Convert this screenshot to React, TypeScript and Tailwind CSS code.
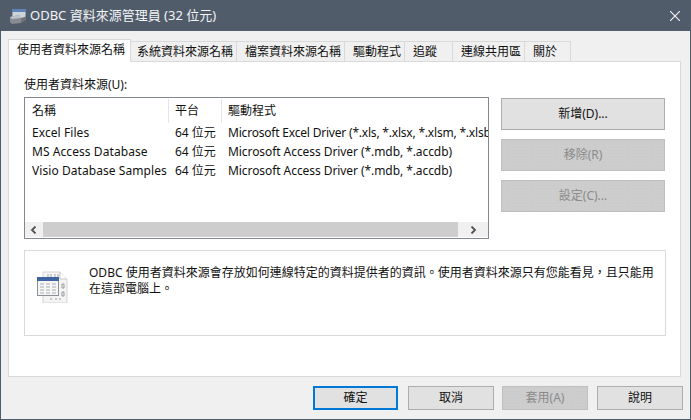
const FONT = 'font-["Noto_Sans","Noto_Sans_CJK_TC",sans-serif]'

const tabs = [
  { label: '系統資料來源名稱', cls: 'w-[106px] pl-[6px]' },
  { label: '檔案資料來源名稱', cls: 'w-[108px] pl-[8px]' },
  { label: '驅動程式', cls: 'w-[60px] pl-[8px]' },
  { label: '追蹤', cls: 'w-[48px] pl-[8px]' },
  { label: '連線共用區', cls: 'w-[72px] pl-[8px]' },
  { label: '關於', cls: 'w-[46px] pl-[8px]' },
]

const rows = [
  { name: 'Excel Files', driver: 'Microsoft Excel Driver (*.xls, *.xlsx, *.xlsm, *.xlsb)', fit: 'tracking-[-0.2px]' },
  { name: 'MS Access Database', driver: 'Microsoft Access Driver (*.mdb, *.accdb)', fit: 'tracking-[-0.07px]' },
  { name: 'Visio Database Samples', driver: 'Microsoft Access Driver (*.mdb, *.accdb)', fit: 'tracking-[-0.07px]' },
]

function TitleIcon() {
  return (
    <svg width="18" height="16" viewBox="0 0 18 16">
      <rect x="3.5" y="1.5" width="13" height="10" fill="#ccd3db" stroke="#98a1ab" />
      <rect x="3" y="1" width="14" height="3" fill="#5f83b8" />
      <path d="M1 9 L10 7 L12 10 L12 15 L3 16 L1 14 Z" fill="#868c92" />
      <path d="M1 9 L10 7 L12 10 L3 11 Z" fill="#bcc2c7" />
      <path d="M12 10 L17 8.5 L17 12 L12 15 Z" fill="#6f757a" />
    </svg>
  )
}

function InfoIcon() {
  return (
    <svg width="32" height="32" viewBox="0 0 32 32">
      <path d="M6 1 H23 L30 8 V32 H6 Z" fill="#f4f4f4" stroke="#d4d4d4" />
      <path d="M23 1 V8 H30" fill="#ffffff" stroke="#c8c8c8" />
      <path d="M11 3 v3 M14 3 v3 M18 3 v3 M21 3 v3" stroke="#a8a8a8" />
      <path d="M25 13 h2 v4 h-2 Z M25 21 h2 v4 h-2 Z M13 28 h2 M18 28 h2 M22 28 h2" stroke="#9a9a9a" fill="none" />
      <rect x="0.5" y="6.5" width="21" height="18" fill="#f6f6f6" stroke="#8a8f99" />
      <rect x="0" y="6" width="22" height="4" fill="#3f62a1" />
      <path d="M3 13 h4 M9 13 h4 M15 13 h4 M3 16 h4 M9 16 h4 M15 16 h4 M3 19 h4 M9 19 h4 M15 19 h4 M3 22 h4 M9 22 h4 M15 22 h4" stroke="#a9adb3" />
    </svg>
  )
}

function Button({ label, disabled, primary, className }: { label: string; disabled?: boolean; primary?: boolean; className: string }) {
  return (
    <div
      className={`flex items-center justify-center text-xs ${className} ${
        disabled
          ? 'bg-[#cdcdcd] bg-[radial-gradient(circle,#c8c8c8_0.7px,transparent_0.8px)] bg-[length:3px_3px] border border-[#bfbfbf] text-[#8a8a8a]'
          : primary
            ? 'bg-[#e1e1e1] border-2 border-[#0078d7] text-[#111111]'
            : 'bg-[#e1e1e1] border border-[#adadad] text-[#111111]'
      }`}
    >
      {label}
    </div>
  )
}

export default function App() {
  return (
    <div lang="zh-Hant" className={`w-[691px] h-[420px] flex flex-col bg-[#f0f0f0] border border-t-0 border-[#515c6b] text-[#111111] overflow-hidden ${FONT}`}>
      <div className="h-[31px] shrink-0 -mx-px bg-[#515c6b] flex items-center text-white">
        <div className="ml-[9px] w-[18px] flex"><TitleIcon /></div>
        <span className="ml-[3px] text-[13px] text-[#f2f4f6]">ODBC 資料來源管理員 (32 位元)</span>
        <svg width="10" height="10" viewBox="0 0 10 10" className="ml-auto mr-[11px]">
          <path d="M0 0 L10 10 M10 0 L0 10" stroke="#f2f4f6" strokeWidth="1.1" />
        </svg>
      </div>

      <div className="flex-1 flex flex-col px-[7px] min-h-0">
        <div className="h-[30px] shrink-0 flex items-end relative z-10">
          <div className="w-[123px] h-[23px] bg-white border border-b-0 border-[#d9d9d9] flex items-center pl-[8px] text-xs -mb-px pb-[2px] whitespace-nowrap">
            使用者資料來源名稱
          </div>
          {tabs.map((t) => (
            <div key={t.label} className={`${t.cls} h-[20px] bg-[#f0f0f0] border border-l-0 border-b-0 border-[#d9d9d9] flex items-center text-xs whitespace-nowrap`}>
              {t.label}
            </div>
          ))}
        </div>

        <div className="w-[673px] h-[316px] shrink-0 bg-white border border-[#d9d9d9] pl-[15px] pt-[13px]">
          <div className="h-[20px] flex items-center text-xs">使用者資料來源(U):</div>
          <div className="flex">
            <div className="w-[465px] h-[142px] mt-[2px] border border-[#828790] flex flex-col shrink-0">
              <div className="h-[25px] pt-px flex text-xs items-center shrink-0">
                <div className="w-[144px] h-full pl-[7px] flex items-center border-r border-[#e5e5e5] shrink-0">名稱</div>
                <div className="w-[53px] h-full pl-[6px] flex items-center border-r border-[#e5e5e5] shrink-0">平台</div>
                <div className="pl-[6px]">驅動程式</div>
              </div>
              <div className="flex-1 overflow-hidden">
                {rows.map((r) => (
                  <div key={r.name} className="h-[19px] flex items-center text-xs whitespace-nowrap">
                    <div className="w-[144px] pl-[7px] shrink-0 tracking-[0.07px]">{r.name}</div>
                    <div className="w-[53px] pl-[6px] shrink-0">64 位元</div>
                    <div className={`pl-[6px] shrink-0 ${r.fit}`}>{r.driver}</div>
                  </div>
                ))}
              </div>
              <div className="h-[15px] mb-px shrink-0 flex bg-[#f0f0f0]">
                <div className="w-[18px] flex items-center justify-center">
                  <svg width="8" height="8" viewBox="0 0 8 8"><path d="M5.5 0.5 L2 4 L5.5 7.5" fill="none" stroke="#505050" strokeWidth="1.8" /></svg>
                </div>
                <div className="w-[415px] bg-[#cdcdcd]" />
                <div className="flex-1 flex items-center justify-center">
                  <svg width="8" height="8" viewBox="0 0 8 8"><path d="M2.5 0.5 L6 4 L2.5 7.5" fill="none" stroke="#505050" strokeWidth="1.8" /></svg>
                </div>
              </div>
            </div>
            <div className="ml-[12px] mt-[3px] flex flex-col gap-[9px]">
              <Button label="新增(D)..." className="w-[164px] h-[32px]" />
              <Button label="移除(R)" disabled className="w-[164px] h-[32px]" />
              <Button label="設定(C)..." disabled className="w-[164px] h-[32px]" />
            </div>
          </div>
          <div className="w-[642px] h-[86px] mt-[11px] border border-[#d9d9d9] flex">
            <div className="ml-[12px] mt-[20px] w-[32px] shrink-0"><InfoIcon /></div>
            <p className="ml-[20px] mt-[14px] w-[570px] text-xs leading-[16px]">
              ODBC 使用者資料來源會存放如何連線特定的資料提供者的資訊。使用者資料來源只有您能看見，且只能用在這部電腦上。
            </p>
          </div>
        </div>

        <div className="flex mt-[9px]">
          <Button label="確定" primary className="ml-[305px] w-[85px] h-[24px]" />
          <Button label="取消" className="ml-[10px] w-[86px] h-[24px]" />
          <Button label="套用(A)" disabled className="ml-[8px] w-[86px] h-[24px]" />
          <Button label="說明" className="ml-[9px] w-[86px] h-[24px]" />
        </div>
      </div>
    </div>
  )
}
